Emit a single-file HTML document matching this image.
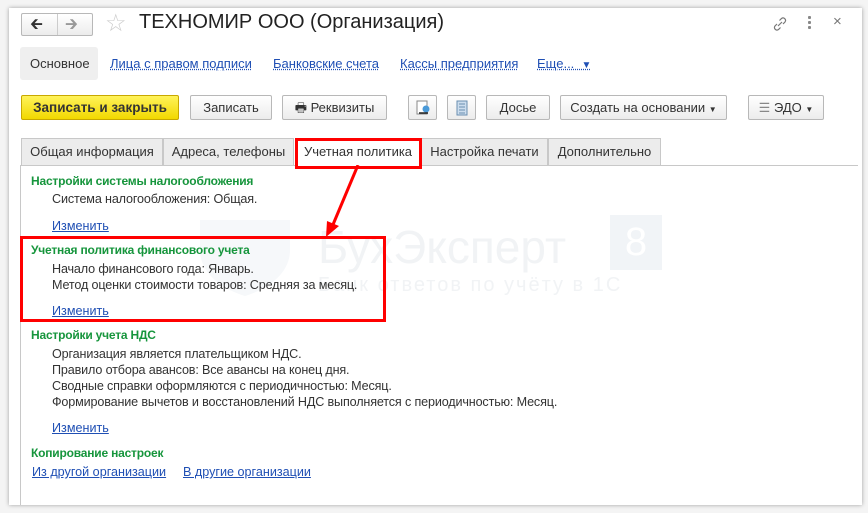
<!DOCTYPE html>
<html><head><meta charset="utf-8"><style>
*{box-sizing:border-box;margin:0;padding:0}
body{width:868px;height:513px;background:#f4f4f4;font-family:"Liberation Sans",Arial,sans-serif;position:relative;overflow:hidden;color:#333}
.win{position:absolute;left:9px;top:8px;width:853px;height:497px;background:#fff;box-shadow:0 0 4px rgba(0,0,0,.35)}
.a{position:absolute;white-space:nowrap}
.btn{position:absolute;height:25px;border:1px solid #b8b8b8;border-radius:2px;background:linear-gradient(#fff,#ececec);font-size:13px;line-height:23px;text-align:center;color:#333}
.lnk{color:#1f4fb4;text-decoration:underline;text-decoration-style:dotted;font-size:13px}
.ul{color:#1f4fb4;text-decoration:underline;font-size:12.6px}
.tab{position:absolute;top:138px;height:27px;border:1px solid #c8c8c8;border-bottom:none;background:#ececec;font-size:13px;line-height:26px;text-align:center;color:#333}
.h{color:#16953c;font-weight:bold;font-size:12px;position:absolute;white-space:nowrap;letter-spacing:-.2px}
.t{font-size:12.6px;position:absolute;white-space:nowrap;color:#333;letter-spacing:-.15px}
</style></head><body>
<div class="win"></div>
<div class="btn" style="left:21px;top:13px;width:72px;height:23px;"></div>
<div class="a" style="left:57px;top:14px;width:1px;height:21px;background:#ccc"></div>
<div class="a" style="left:30px;top:13px;font-size:16px;color:#333">&#129136;</div>
<div class="a" style="left:65px;top:13px;font-size:16px;color:#999">&#129138;</div>
<div class="a" style="left:105px;top:9px;font-size:24px;color:#ccc">☆</div>
<div class="a" style="left:139px;top:11px;font-size:20px;color:#222">ТЕХНОМИР ООО (Организация)</div>
<svg class="a" style="left:771px;top:15px" width="18" height="18" viewBox="0 0 18 18"><path d="M7 11l4-4M6 9l-2 2a2.5 2.5 0 0 0 3.5 3.5l2-2M12 9l2-2a2.5 2.5 0 0 0-3.5-3.5l-2 2" stroke="#777" fill="none" stroke-width="1.2"/></svg>
<div class="a" style="left:808px;top:16px;width:3px;height:3px;background:#888;box-shadow:0 5px #888,0 10px #888;border-radius:1px"></div>
<div class="a" style="left:833px;top:13px;font-size:15px;color:#777">×</div>
<div class="a" style="left:20px;top:47px;width:78px;height:33px;background:#efefef;border-radius:3px"></div>
<div class="a" style="left:30px;top:56px;font-size:13px;color:#333">Основное</div>
<div class="a lnk" style="left:110px;top:56px">Лица с правом подписи</div>
<div class="a lnk" style="left:273px;top:56px">Банковские счета</div>
<div class="a lnk" style="left:400px;top:56px">Кассы предприятия</div>
<div class="a lnk" style="left:537px;top:56px">Еще... &nbsp;<span style="font-size:10px">▼</span></div>
<div class="btn" style="left:21px;top:95px;width:158px;background:linear-gradient(#fff35a,#f2d800);border-color:#c8a800;font-weight:bold;font-size:13.5px">Записать и закрыть</div>
<div class="btn" style="left:190px;top:95px;width:82px">Записать</div>
<div class="btn" style="left:282px;top:95px;width:105px">&#128438; Реквизиты</div>
<div class="btn" style="left:408px;top:95px;width:29px"><svg width="18" height="18" style="margin-top:3px"><rect x="3" y="2" width="10" height="13" fill="#fff" stroke="#888"/><circle cx="12" cy="10" r="3.5" fill="#4a9ad8"/><path d="M5 14h9" stroke="#222" stroke-width="1.5"/></svg></div>
<div class="btn" style="left:447px;top:95px;width:29px"><svg width="12" height="16" style="margin-top:4px"><rect x="1" y="1" width="10" height="14" fill="#cde" stroke="#6a8eb0"/><path d="M3 4h6M3 7h6M3 10h6M3 13h6" stroke="#6a8eb0"/></svg></div>
<div class="btn" style="left:486px;top:95px;width:64px">Досье</div>
<div class="btn" style="left:560px;top:95px;width:167px">Создать на основании <span style="font-size:8px">▼</span></div>
<div class="btn" style="left:748px;top:95px;width:76px"><span style="color:#888">☰</span> ЭДО <span style="font-size:8px">▼</span></div>
<div class="a" style="left:20px;top:165px;width:838px;height:1px;background:#c8c8c8"></div>
<div class="a" style="left:20px;top:165px;width:1px;height:340px;background:#c8c8c8"></div>
<div class="tab" style="left:21px;width:142px">Общая информация</div>
<div class="tab" style="left:163px;width:131px">Адреса, телефоны</div>
<div class="tab" style="left:296px;width:124px;background:#fff;height:28px">Учетная политика</div>
<div class="tab" style="left:421px;width:127px">Настройка печати</div>
<div class="tab" style="left:548px;width:113px">Дополнительно</div>
<div class="a" style="left:295px;top:138px;width:127px;height:31px;border:3px solid #f00"></div>
<!-- watermark -->
<svg class="a" style="left:198px;top:218px" width="95" height="80"><path d="M2 2h90v30c0 25-25 40-45 46C27 72 2 57 2 32z" fill="#f6f8fa"/></svg>
<div class="a" style="left:318px;top:220px;font-size:46px;color:#f1f3f5">БухЭксперт</div>
<div class="a" style="left:610px;top:215px;width:52px;height:55px;background:#f1f4f7;color:#fff;font-size:40px;text-align:center;line-height:55px">8</div>
<div class="a" style="left:318px;top:274px;font-size:20px;color:#f1f3f5;letter-spacing:2px">Банк ответов по учёту в 1С</div>
<div class="h" style="left:31px;top:174px">Настройки системы налогообложения</div>
<div class="t" style="left:52px;top:192px">Система налогообложения: Общая.</div>
<div class="a ul" style="left:52px;top:219px">Изменить</div>
<div class="h" style="left:31px;top:243px">Учетная политика финансового учета</div>
<div class="t" style="left:52px;top:262px">Начало финансового года: Январь.</div>
<div class="t" style="left:52px;top:278px">Метод оценки стоимости товаров: Средняя за месяц.</div>
<div class="a ul" style="left:52px;top:304px">Изменить</div>
<div class="a" style="left:20px;top:236px;width:366px;height:86px;border:3px solid #f00"></div>
<svg class="a" style="left:320px;top:165px" width="45" height="80"><path d="M38 0L12 62" stroke="#f00" stroke-width="3"/><path d="M6 72l1-16 12 5z" fill="#f00"/></svg>
<div class="h" style="left:31px;top:328px">Настройки учета НДС</div>
<div class="t" style="left:52px;top:347px">Организация является плательщиком НДС.</div>
<div class="t" style="left:52px;top:363px">Правило отбора авансов: Все авансы на конец дня.</div>
<div class="t" style="left:52px;top:379px">Сводные справки оформляются с периодичностью: Месяц.</div>
<div class="t" style="left:52px;top:395px">Формирование вычетов и восстановлений НДС выполняется с периодичностью: Месяц.</div>
<div class="a ul" style="left:52px;top:421px">Изменить</div>
<div class="h" style="left:31px;top:446px">Копирование настроек</div>
<div class="a ul" style="left:32px;top:465px">Из другой организации</div>
<div class="a ul" style="left:183px;top:465px">В другие организации</div>
</body></html>
